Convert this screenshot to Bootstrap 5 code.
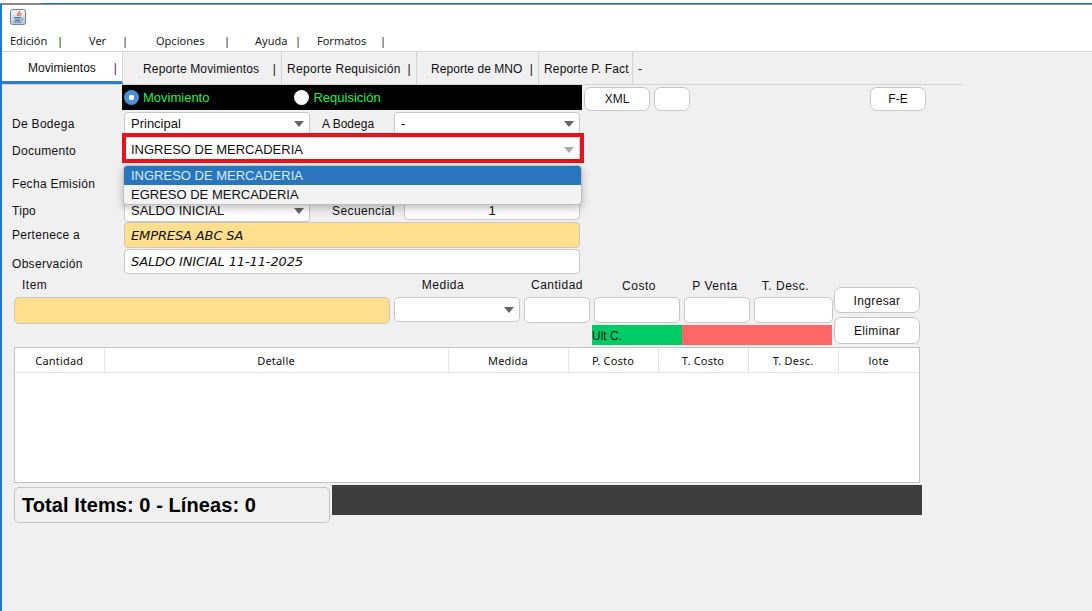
<!DOCTYPE html>
<html lang="es">
<head>
<meta charset="utf-8">
<title>Movimientos</title>
<link rel="stylesheet" href="https://cdn.jsdelivr.net/npm/bootstrap@5.3.0/dist/css/bootstrap.min.css">
<style>
html,body{height:100%;}
body{background:#f0f0f0;font:12px/16px "Liberation Sans",Arial,sans-serif;color:#111;overflow:hidden;}
.app-shell{height:607px;border-left:2px solid #1a78e0;}
.top-band{background:#fff;height:48px;border-bottom:1px solid #d4d4d4;border-top:1px solid #8a8a8a;}
.top-cover{height:4px;background:linear-gradient(to right,#8a8a8a 41px,#1a78e0 41px) bottom/100% 1px no-repeat #fff;}
.java-ico{display:block;margin:4px 0 0 8px;}
.menu-line{height:16px;margin-top:8px;font-family:"Noto Sans",sans-serif;font-size:11px;color:#222;}
.menu-line>span{display:flex;justify-content:space-between;}
.menu-line>span:nth-child(1){margin-left:8px;width:53px;}
.menu-line>span:nth-child(2){margin-left:26px;width:39px;}
.menu-line>span:nth-child(3){margin-left:28px;width:74px;}
.menu-line>span:nth-child(4){margin-left:25px;width:46px;}
.menu-line>span:nth-child(5){margin-left:16px;width:69px;}
.tab-strip{height:33px;width:960px;border-bottom:1px solid #d4d4d4;flex-wrap:nowrap;}
.tab-cell{height:32px;border-right:1px solid #d4d4d4;display:flex;align-items:center;justify-content:space-between;letter-spacing:.15px;white-space:nowrap;padding-top:2px!important;}
.tab-cell.active-tab{background:#fff;border-bottom:3px solid #2d7ec4;width:121px;padding:0 5px 0 26px;height:32px;letter-spacing:.05px;}
.tab-cell:nth-child(2){width:159px;padding:0 5px 0 20px;}
.tab-cell:nth-child(3){width:135px;padding:0 5px 0 5px;letter-spacing:.3px;}
.tab-cell:nth-child(4){width:122px;padding:0 5px 0 14px;letter-spacing:.05px;}
.tab-cell:nth-child(5){width:94px;padding:0 2px 0 5px;}
.tab-tail{margin-left:5px;line-height:34px;}
.pipe{color:#5b1a6b;}
.form-area{padding-left:10px;}
.line-a{height:25px;margin-left:110px;}
.black-bar{background:#000;width:460px;height:25px;color:#22f04a;display:flex;align-items:center;font-size:13px;}
.radio-blue,.radio-white{width:15px;height:15px;border-radius:50%;margin:0 4px 0 2px;flex:none;}
.radio-blue{background:radial-gradient(circle,#fff 0 2.5px,#4a90d9 3px);}
.radio-white{background:#fff;margin-left:85px;}
.soft-btn{height:24px;padding:0;font:12px "Liberation Sans",sans-serif;background:#fff;border:1px solid #c6c6c6;border-radius:7px;color:#111;margin-top:2px;}
.w-xml{width:66px;margin-left:2px;}
.w-blank{width:36px;margin-left:4px;}
.w-fe{width:56px;margin-left:180px;}
.field-row{display:flex;align-items:flex-start;}
.side-label{width:112px;flex:none;font-size:12px;letter-spacing:.3px;}
.java-select.form-select,.java-input.form-control{font:13px/16px "Liberation Sans",sans-serif;color:#111;border:1px solid #c8c8c8;border-radius:4px;padding:0 6px;min-height:0;box-shadow:none;}
.java-select.form-select{background-color:#fff;background-image:url("data:image/svg+xml,%3Csvg xmlns='http://www.w3.org/2000/svg' width='10' height='6'%3E%3Cpath d='M0 0h10L5 6z' fill='%23666'/%3E%3C/svg%3E");background-size:10px 6px;background-position:right 5px center;}
.r-bodega{height:23px;margin-top:2px;}
.r-bodega .side-label,.lbl-abodega{line-height:25px;}
.w-186{width:186px;}
.lbl-abodega{width:84px;flex:none;padding-left:12px;}
.r-doc{height:26px;margin-top:2px;}
.r-doc .side-label{line-height:28px;}
.doc-wrap{position:relative;width:456px;height:26px;}
.doc-wrap .java-select{height:26px;background-image:url("data:image/svg+xml,%3Csvg xmlns='http://www.w3.org/2000/svg' width='10' height='6'%3E%3Cpath d='M0 0h10L5 6z' fill='%23aaa'/%3E%3C/svg%3E");}
.red-frame{position:absolute;left:-2px;right:-4px;top:-4px;bottom:0;border:4px solid #e3141c;pointer-events:none;}
.pop-list{position:absolute;left:-1px;top:28px;width:459px;background:#f3f3f3;border:1px solid #c0c0c0;border-radius:4px;box-shadow:0 3px 8px rgba(0,0,0,.25);z-index:5;overflow:hidden;font-size:13px;}
.pop-list .list-group-item{border:0;padding:0 7px;height:19px;line-height:19px;background:transparent;color:#111;border-radius:0;}
.pop-list .list-group-item.active{background:#2976bd;color:#d9ecff;}
.r-fecha{height:36px;margin-top:1px;padding-top:12px;}
.r-tipo{height:22px;}
.r-tipo .side-label{line-height:22px;}
.r-tipo .java-select{height:22px;}
.sec-label{width:94px;flex:none;padding-left:22px;line-height:22px;letter-spacing:.4px;}
.sec-field.form-control{width:176px;height:20px;text-align:center;padding:0;}
.gold-field.form-control{background:#fddf8e;}
.r-per{height:26px;}
.r-per .side-label{line-height:26px;}
.comic-field.form-control{width:456px;height:26px;font:italic 13px "DejaVu Sans",sans-serif;letter-spacing:-.12px;}
.r-obs{height:25px;margin-top:1px;}
.r-obs .side-label{line-height:30px;}
.r-obs .comic-field{height:25px;}
.item-block{display:flex;height:70px;margin-left:2px;margin-top:1px;}
.item-main{width:820px;flex:none;}
.cap-row{display:flex;height:22px;font-size:12px;letter-spacing:.5px;}
.cap-row>span{text-align:center;flex:none;line-height:20px;}
.cap-row>span:nth-child(1){width:380px;text-align:left;padding-left:8px;}
.cap-row>span:nth-child(2){width:130px;padding-right:32px;}
.cap-row>span:nth-child(3){width:66px;margin-right:4px;}
.cap-row>span:nth-child(n+4){line-height:22px;}
.cap-row>span:nth-child(4){width:86px;margin-right:4px;padding-left:4px;}
.cap-row>span:nth-child(5){width:66px;margin-right:4px;padding-right:4px;}
.cap-row>span:nth-child(6){width:80px;padding-right:17px;}
.input-row{display:flex;gap:4px;height:28px;align-items:flex-start;}
.input-row .form-control,.input-row .form-select{flex:none;border-radius:5px;}
.w-item{width:376px;height:27px;}
.w-med{width:126px;height:25px;}
.w-can{width:66px;height:26px;}
.w-cos{width:86px;height:26px;}
.w-ven{width:66px;height:26px;}
.w-des{width:79px;height:26px;}
.mini-row{display:flex;margin-left:578px;height:20px;font-size:12px;}
.ult-c{background:#00cc66;width:90px;line-height:22px;}
.ult-red{background:#ff6666;width:150px;}
.btn-col{width:86px;flex:none;margin-top:12px;}
.btn-col .soft-btn{width:86px;height:26px;display:block;margin:0 0 4px;letter-spacing:.35px;padding-top:2px;}
.btn-col .soft-btn+.soft-btn{height:27px;padding-top:0;}
.grid-box{width:906px;height:136px;margin:2px 0 0 2px;background:#fff;border:1px solid #c4c4c4;}
.grid-box .table{margin:0;table-layout:fixed;width:904px;font:11px "Noto Sans",sans-serif;letter-spacing:.2px;}
.grid-box th{font-weight:400;text-align:center;height:24px;padding:1px 0 0;border-right:1px solid #e4e4e4;border-bottom:1px solid #e4e4e4;color:#111;vertical-align:middle;}
.grid-box th:last-child{border-right:0;}
.foot-row{display:flex;margin:2px 0 0 2px;align-items:flex-start;}
.total-box{width:316px;height:36px;margin-top:2px;border:1px solid #c4c4c4;border-radius:5px;font:700 20px/35px "Liberation Sans",sans-serif;padding-left:7px;color:#000;letter-spacing:.08px;}
.dark-strip{width:590px;height:30px;background:#3d3d3d;margin-left:2px;}
</style>
</head>
<body>
<div class="top-cover"></div>
<div class="app-shell">
  <header class="top-band">
    <svg class="java-ico" width="16" height="16" viewBox="0 0 16 16" aria-hidden="true">
      <defs><linearGradient id="icoBg" x1="0" y1="0" x2="0" y2="1"><stop offset="0" stop-color="#f4f6fa"/><stop offset="1" stop-color="#b9c6d8"/></linearGradient></defs>
      <rect x=".5" y=".5" width="15" height="15" rx="2" fill="url(#icoBg)" stroke="#6f8299"/>
      <path d="M9.500 2c1 1.500-3 2.500-1.500 5M11 4c.3 1-1.500 1.500-1 3" fill="none" stroke="#e0601c" stroke-width="1.300"/>
      <path d="M4 8.500h7M4.500 10h6M5 11.500h5M3.500 13h8M11.500 9c2 0 1.500 2.500-.5 2.500" fill="none" stroke="#4a6f96" stroke-width=".9"/>
    </svg>
    <nav class="menu-line d-flex">
      <span><span>Edición</span><span>|</span></span>
      <span><span>Ver</span><span>|</span></span>
      <span><span>Opciones</span><span>|</span></span>
      <span><span>Ayuda</span><span>|</span></span>
      <span><span>Formatos</span><span>|</span></span>
    </nav>
  </header>
  <div class="tab-strip d-flex">
    <div class="tab-cell active-tab"><span>Movimientos</span><span class="pipe">|</span></div>
    <div class="tab-cell"><span>Reporte Movimientos</span><span>|</span></div>
    <div class="tab-cell"><span>Reporte Requisición</span><span>|</span></div>
    <div class="tab-cell"><span>Reporte de MNO</span><span>|</span></div>
    <div class="tab-cell"><span>Reporte P. Fact</span></div>
    <span class="tab-tail">-</span>
  </div>
  <main class="form-area">
    <div class="line-a d-flex">
      <div class="black-bar">
        <span class="radio-blue"></span><span>Movimiento</span>
        <span class="radio-white"></span><span>Requisición</span>
      </div>
      <button type="button" class="btn soft-btn w-xml">XML</button>
      <button type="button" class="btn soft-btn w-blank"></button>
      <button type="button" class="btn soft-btn w-fe">F-E</button>
    </div>
    <div class="field-row r-bodega">
      <label class="side-label">De Bodega</label>
      <select class="form-select java-select w-186 r-bodega m-0"><option>Principal</option></select>
      <label class="lbl-abodega">A Bodega</label>
      <select class="form-select java-select w-186 r-bodega m-0"><option>-</option></select>
    </div>
    <div class="field-row r-doc">
      <label class="side-label">Documento</label>
      <div class="doc-wrap">
        <select class="form-select java-select w-100"><option>INGRESO DE MERCADERIA</option></select>
        <span class="red-frame"></span>
        <div class="list-group pop-list">
          <div class="list-group-item active">INGRESO DE MERCADERIA</div>
          <div class="list-group-item">EGRESO DE MERCADERIA</div>
        </div>
      </div>
    </div>
    <div class="r-fecha"><label class="side-label">Fecha Emisión</label></div>
    <div class="field-row r-tipo">
      <label class="side-label">Tipo</label>
      <select class="form-select java-select w-186"><option>SALDO INICIAL</option></select>
      <label class="sec-label">Secuencial</label>
      <input class="form-control java-input sec-field" value="1" aria-label="Secuencial">
    </div>
    <div class="field-row r-per">
      <label class="side-label">Pertenece a</label>
      <input class="form-control java-input comic-field gold-field" value="EMPRESA ABC SA" aria-label="Pertenece a">
    </div>
    <div class="field-row r-obs">
      <label class="side-label">Observación</label>
      <input class="form-control java-input comic-field" value="SALDO INICIAL 11-11-2025" aria-label="Observación">
    </div>
    <div class="item-block">
      <div class="item-main">
        <div class="cap-row"><span>Item</span><span>Medida</span><span>Cantidad</span><span>Costo</span><span>P Venta</span><span>T. Desc.</span></div>
        <div class="input-row">
          <input class="form-control java-input gold-field w-item" aria-label="Item">
          <select class="form-select java-select w-med" aria-label="Medida"></select>
          <input class="form-control java-input w-can" aria-label="Cantidad">
          <input class="form-control java-input w-cos" aria-label="Costo">
          <input class="form-control java-input w-ven" aria-label="P Venta">
          <input class="form-control java-input w-des" aria-label="T. Desc.">
        </div>
        <div class="mini-row"><div class="ult-c">Ult C.</div><div class="ult-red"></div></div>
      </div>
      <div class="btn-col">
        <button type="button" class="btn soft-btn">Ingresar</button>
        <button type="button" class="btn soft-btn">Eliminar</button>
      </div>
    </div>
    <div class="grid-box">
      <table class="table">
        <colgroup><col width="89"><col width="344"><col width="120"><col width="90"><col width="90"><col width="90"><col width="81"></colgroup>
        <thead><tr><th>Cantidad</th><th>Detalle</th><th>Medida</th><th>P. Costo</th><th>T. Costo</th><th>T. Desc.</th><th>lote</th></tr></thead>
      </table>
    </div>
    <div class="foot-row">
      <div class="total-box">Total Items: 0 - Líneas: 0</div>
      <div class="dark-strip"></div>
    </div>
  </main>
</div>
</body>
</html>
